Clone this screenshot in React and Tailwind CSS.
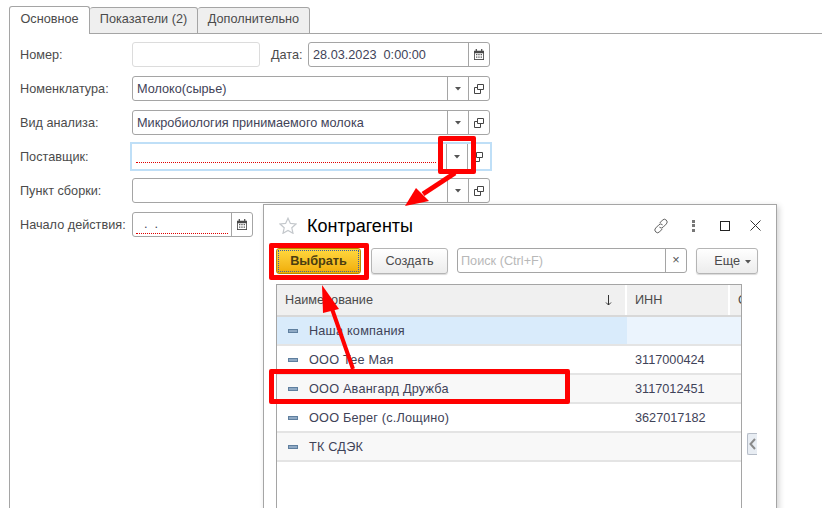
import React from 'react';

const CalendarIcon = () => (
  <svg width="10" height="11" viewBox="0 0 12 13" className="text-[#4a4a4a]">
    <path fill="currentColor" d="M2 0h1.500v2h5V0H10v2h2v11H0V2h2z" />
    <path fill="#fff" d="M1 5h10v7H1z" />
    <path fill="currentColor" d="M2.500 6h1.500v1.500H2.500zM5.200 6h1.500v1.500H5.200zM8 6h1.500v1.500H8zM2.500 9h1.500v1.500H2.500zM5.200 9h1.500v1.500H5.200zM8 9h1.500v1.500H8z" />
  </svg>
);

const Caret = () => (
  <svg width="6" height="4" viewBox="0 0 6 4">
    <path fill="#555" d="M0 0h6L3 3.500z" />
  </svg>
);

const OpenIcon = () => (
  <svg width="10" height="10" viewBox="0 0 10 10" fill="none" stroke="#444">
    <path d="M3.500.500h6v5h-6z" />
    <path d="M3.500 3.500h-3v6h6v-4" />
  </svg>
);

const FieldButton = ({ children }) => (
  <div className="flex h-full w-[21px] shrink-0 items-center justify-center border-l border-[#a5a5a5]">
    {children}
  </div>
);

const Label = ({ children, className = 'w-[112px]' }) => (
  <div className={`shrink-0 pt-[2px] text-[#4b4b4b] ${className}`}>{children}</div>
);

const LookupField = ({ value }) => (
  <div className="flex h-[25px] w-[358px] items-center rounded-[3px] border border-[#a5a5a5] bg-white">
    <div className="flex-1 pl-[4px] pt-[2px] text-[#3f4358]">{value}</div>
    <FieldButton><Caret /></FieldButton>
    <FieldButton><OpenIcon /></FieldButton>
  </div>
);

const FormRow = ({ label, children }) => (
  <div className="flex h-[25px] items-center">
    <Label>{label}</Label>
    {children}
  </div>
);

const rows = [
  { name: 'Наша компания', inn: '', cls: 'bg-[#d9ebfb]', innCls: 'bg-[#ebf4fd]' },
  { name: 'ООО Тее Мая', inn: '3117000424', cls: 'bg-white', innCls: '' },
  { name: 'ООО Авангард Дружба', inn: '3117012451', cls: 'bg-[#f8f8f8]', innCls: '' },
  { name: 'ООО Берег (с.Лощино)', inn: '3627017182', cls: 'bg-white', innCls: '' },
  { name: 'ТК СДЭК', inn: '', cls: 'bg-[#f8f8f8]', innCls: '' },
];

const Dialog = () => (
  <div className="absolute left-[263px] top-[204px] h-[320px] w-[514px] border border-[#a5a5a5] bg-white shadow-[2px_2px_6px_rgba(0,0,0,0.18)]">
    <div className="flex h-[41px] items-center pl-[15px] pr-[15px]">
      <svg width="18" height="17" viewBox="0 0 18 17" fill="none" stroke="#c4c8cc" strokeWidth="1.2">
        <path d="M9 1.200l2.400 5.200 5.600.6-4.200 3.800 1.200 5.500L9 13.500l-5 2.800 1.200-5.500L1 7l5.600-.6z" />
      </svg>
      <div className="ml-[10px] flex-1 text-[18px] leading-none text-black">Контрагенты</div>
      <svg width="16" height="16" viewBox="0 0 17 17" fill="none" stroke="#555" strokeWidth="1" className="mr-[23px]">
        <path d="M7 5.500l3-3.200a2.800 2.800 0 0 1 4.200 4l-3.400 3.400a2.800 2.800 0 0 1-4 0" />
        <path d="M10 11.500l-3 3.200a2.800 2.800 0 0 1-4.200-4l3.400-3.400a2.800 2.800 0 0 1 4 0" />
      </svg>
      <div className="mr-[25px] flex flex-col gap-[1.5px]">
        <span className="h-[3px] w-[3px] bg-[#777]" />
        <span className="h-[3px] w-[3px] bg-[#777]" />
        <span className="h-[3px] w-[3px] bg-[#777]" />
      </div>
      <div className="mr-[20px] h-[10px] w-[10px] border-[1.5px] border-[#222]" />
      <svg width="11" height="11" viewBox="0 0 11 11" stroke="#333" strokeWidth="1">
        <path d="M.500.500l10 10M10.500.500l-10 10" />
      </svg>
    </div>

    <div className="mt-[1px] flex h-[27px] items-center pl-[12px]">
      <button className="h-[26px] w-[85px] rounded-[3px] border border-[#b78a00] bg-gradient-to-b from-[#ffd83d] to-[#f0ad00] p-[1px] font-bold text-[#4a3d10]">
        <div className="flex h-full items-center justify-center border border-dotted border-[#3f5fa0] pt-[2px]">Выбрать</div>
      </button>
      <button className="ml-[10px] h-[26px] w-[77px] rounded-[3px] border border-[#b5b5b5] bg-gradient-to-b from-white to-[#ececec] pt-[2px] text-[#4b4b4b] shadow-[0_1px_1px_rgba(0,0,0,0.15)]">
        Создать
      </button>
      <div className="ml-[9px] flex h-[25px] w-[230px] items-center rounded-[3px] border border-[#a5a5a5]">
        <div className="flex-1 pl-[3px] pt-[2px] text-[#b8b8b8]">Поиск (Ctrl+F)</div>
        <div className="flex h-full w-[21px] items-center justify-center border-l border-[#a5a5a5] text-[#555]">×</div>
      </div>
      <button className="ml-[9px] flex h-[26px] w-[62px] items-center justify-end gap-[5px] rounded-[3px] border border-[#b5b5b5] bg-gradient-to-b from-white to-[#ececec] pr-[6px] pt-[2px] text-[#4b4b4b] shadow-[0_1px_1px_rgba(0,0,0,0.15)]">
        Еще <Caret />
      </button>
    </div>

    <div className="ml-[12px] mt-[10px] h-[300px] w-[466px] overflow-hidden border-l border-r border-t border-[#a5a5a5]">
      <div className="flex h-[32px] border-b-2 border-[#d8d8d8] bg-[#f0f0f0] text-[#4b4b4b]">
        <div className="flex w-[350px] items-center justify-between border-r-2 border-white pl-[8px] pr-[13px]">
          <span className="pt-[1px]">Наименование</span>
          <svg width="7" height="11" viewBox="0 0 7 11" fill="none" stroke="#333">
            <path d="M3.500 0v10M1 7.500l2.500 2.500L6 7.500" />
          </svg>
        </div>
        <div className="flex w-[103px] items-center border-r-2 border-white pl-[8px] pt-[1px]">ИНН</div>
        <div className="flex flex-1 items-center overflow-hidden pl-[8px] pt-[1px]">О</div>
      </div>
      {rows.map((row) => (
        <div key={row.name} className={`flex h-[29px] border-b-2 border-[#e4e4e4] text-[#3f4358] ${row.cls}`}>
          <div className="flex w-[350px] items-center">
            <div className="ml-[11px] h-[4px] w-[10px] border border-[#5f7f9f] bg-[#8fa9c4]" />
            <span className="ml-[11px] pt-[2px] tracking-[0.2px]">{row.name}</span>
          </div>
          <div className={`flex w-[103px] items-center pl-[8px] pt-[2px] ${row.innCls}`}>{row.inn}</div>
          <div className={`flex-1 ${row.innCls}`} />
        </div>
      ))}
    </div>

    <div className="absolute left-[483px] top-[228px] flex h-[22px] w-[10px] items-center justify-center rounded-l-[2px] border border-r-0 border-[#b5bcc7] bg-[#e8edf3]">
      <svg width="7" height="12" viewBox="0 0 7 12" fill="none" stroke="#8a8a8a" strokeWidth="2">
        <path d="M6 1L1.500 6 6 11" />
      </svg>
    </div>
  </div>
);

export default function App() {
  return (
    <div className="relative flex h-[508px] w-[822px] flex-col overflow-hidden bg-white font-['Liberation_Sans',Arial,sans-serif] text-[12.7px]">
      <div className="flex h-[34px] items-end pl-[9px] pt-[6px]">
        <div className="relative z-10 flex h-[28px] w-[81px] items-center justify-center rounded-t-[3px] border border-b-0 border-[#a5a5a5] bg-white pb-[2px] text-[#4b4b4b]">Основное</div>
        <div className="flex h-[27px] w-[108px] items-center justify-center rounded-t-[3px] border border-l-0 border-[#a5a5a5] bg-[#efefef] pb-[1px] text-[#4b4b4b]">Показатели (2)</div>
        <div className="flex h-[27px] w-[112px] items-center justify-center rounded-t-[3px] border border-l-0 border-[#a5a5a5] bg-[#efefef] pb-[1px] text-[#4b4b4b]">Дополнительно</div>
      </div>

      <div className="-mt-px ml-[9px] flex flex-1 flex-col gap-[9px] border-l border-t border-[#a5a5a5] pl-[10px] pt-[8px]">
        <FormRow label="Номер:">
          <div className="h-[25px] w-[128px] rounded-[3px] border border-[#dcdcdc]" />
          <div className="ml-[11px] w-[37px] pt-[2px] text-[#4b4b4b]">Дата:</div>
          <div className="flex h-[25px] w-[182px] items-center rounded-[3px] border border-[#a5a5a5]">
            <div className="flex-1 whitespace-pre pl-[4px] pt-[2px] text-[#3f4358]">28.03.2023  0:00:00</div>
            <FieldButton><CalendarIcon /></FieldButton>
          </div>
        </FormRow>
        <FormRow label="Номенклатура:">
          <LookupField value="Молоко(сырье)" />
        </FormRow>
        <FormRow label="Вид анализа:">
          <LookupField value="Микробиология принимаемого молока" />
        </FormRow>
        <FormRow label="Поставщик:">
          <div className="-mx-[2px] flex h-[29px] w-[362px] items-center border-2 border-[#bfdff7] px-[2px]">
            <div className="flex h-[25px] flex-1 items-center">
              <div className="mb-[-12px] ml-[2px] mr-[10px] h-0 flex-1 border-b border-dotted border-[#e00000]" />
              <FieldButton><Caret /></FieldButton>
              <FieldButton><OpenIcon /></FieldButton>
            </div>
          </div>
        </FormRow>
        <FormRow label="Пункт сборки:">
          <LookupField value="" />
        </FormRow>
        <FormRow label="Начало действия:">
          <div className="flex h-[25px] w-[121px] items-center rounded-[3px] border border-[#a5a5a5]">
            <div className="relative flex h-full flex-1 items-center pl-[11px] pt-[1px] text-[#3f4358]">
              <span className="whitespace-pre">.  .</span>
              <div className="absolute bottom-[2px] left-[3px] right-[3px] border-b border-dotted border-[#e00000]" />
            </div>
            <FieldButton><CalendarIcon /></FieldButton>
          </div>
        </FormRow>
      </div>

      <Dialog />

      {/* red annotations over the screenshot */}
      <div className="absolute left-[438px] top-[136px] h-[38px] w-[38px] rounded-[2px] border-[5px] border-[#ff0000]" />
      <div className="absolute left-[269px] top-[243px] h-[37px] w-[100px] rounded-[2px] border-[5px] border-[#ff0000]" />
      <div className="absolute left-[269px] top-[369px] h-[35px] w-[301px] rounded-[2px] border-[5px] border-[#ff0000]" />
      <svg className="absolute left-0 top-0" width="822" height="508" viewBox="0 0 822 508">
        <path d="M455 173L423 194" stroke="#ff0000" strokeWidth="5" />
        <path d="M405 206L416 188 429 201z" fill="#ff0000" />
        <path d="M353 369L331 306" stroke="#ff0000" strokeWidth="4" />
        <path d="M322 285L339 309 323 313z" fill="#ff0000" />
      </svg>
    </div>
  );
}
